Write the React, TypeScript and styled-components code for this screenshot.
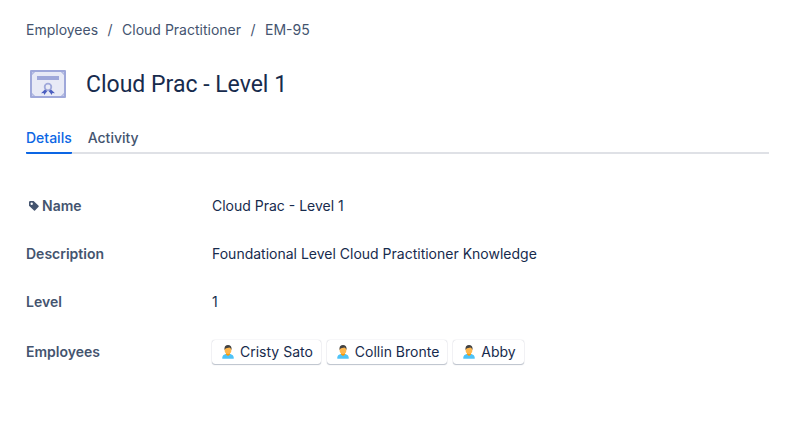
import React, { useState } from "react";
import styled, { createGlobalStyle } from "styled-components";

const GlobalStyle = createGlobalStyle`
  *, *::before, *::after { box-sizing: border-box; }
  body {
    margin: 0;
    background: #ffffff;
    color: #172b4d;
    font-family: Inter, "Liberation Sans", sans-serif;
    font-size: 14px;
    line-height: 20px;
  }
`;

const Page = styled.main`
  padding: 20px 26px;
`;

const BreadcrumbList = styled.ol`
  display: flex;
  flex-wrap: wrap;
  margin: 0;
  padding: 0;
  list-style: none;
`;

const BreadcrumbItem = styled.li`
  color: #44546f;

  & + &::before {
    content: "/";
    display: inline-block;
    width: 24px;
    text-align: center;
  }
`;

const BreadcrumbLink = styled.a`
  color: inherit;
  text-decoration: none;

  &:hover { text-decoration: underline; }
`;

const Header = styled.header`
  display: flex;
  align-items: center;
  gap: 16px;
  margin-top: 24px;
`;

const IconFrame = styled.span`
  display: flex;
  flex: none;
  width: 44px;
  height: 40px;
  align-items: center;
  justify-content: center;
`;

const Title = styled.h1`
  margin: 0;
  padding-top: 2px;
  font-family: Roboto, Inter, sans-serif;
  font-size: 23px;
  font-weight: 400;
  line-height: 28px;
`;

const TabList = styled.div`
  display: flex;
  gap: 16px;
  margin-top: 24px;
  box-shadow: inset 0 -2px #dfe1e6;
`;

const Tab = styled.button<{ $active: boolean }>`
  padding: 0 0 4px;
  border: 0;
  border-bottom: 2px solid ${(p) => (p.$active ? "#0c66e4" : "transparent")};
  border-radius: 1px;
  background: none;
  color: ${(p) => (p.$active ? "#0c66e4" : "#44546f")};
  font: inherit;
  font-weight: 500;
  cursor: pointer;
`;

const Fields = styled.dl`
  margin: 28px 0 0;
`;

const Field = styled.div`
  display: grid;
  grid-template-columns: 186px 1fr;
  align-items: center;
  padding: 13px 0;
  line-height: 22px;
`;

const Label = styled.dt`
  display: flex;
  align-items: center;
  color: #44546f;
  font-weight: 600;
`;

const TagFrame = styled.span`
  display: flex;
  width: 16px;
  justify-content: center;
`;

const Value = styled.dd`
  display: flex;
  flex-wrap: wrap;
  gap: 6px;
  margin: 0;
`;

const Chip = styled.a`
  display: flex;
  align-items: center;
  gap: 4px;
  height: 24px;
  margin: 1px 0;
  padding: 0 8px;
  border-radius: 3px;
  box-shadow: 0 1px 1px rgba(9, 30, 66, 0.25), 0 0 1px rgba(9, 30, 66, 0.31);
  color: inherit;
  text-decoration: none;
`;

const CertificateIcon = () => (
  <svg width="36" height="28" viewBox="0 0 36 28" aria-hidden="true">
    <rect width="36" height="28" rx="1" fill="#9fa8da" />
    <path d="M5 2H31L34 5V23L31 26H5L2 23V5Z" fill="#e8eaf6" />
    <path d="M2 2H4L2 4ZM34 2H32L34 4ZM2 26H4L2 24ZM34 26H32L34 24Z" fill="#c5cae9" />
    <path d="M7 6H29V10H7Z" fill="#9fa8da" />
    <circle cx="18" cy="17" r="3.3" fill="none" stroke="#9fa8da" strokeWidth="1.8" />
    <path d="M15 19.5L11 23.3L13.6 23L14.2 25L17.2 21.3ZM21 19.5L25 23.3L22.4 23L21.8 25L18.8 21.3Z" fill="#4c5fc0" />
  </svg>
);

const TagIcon = () => (
  <svg width="10" height="10" viewBox="0 0 10 10" aria-hidden="true">
    <path
      d="M1.2 0H4.6L9.6 4.8Q10 5.3 9.6 5.8L6 9.5Q5.5 10 5 9.5L0 4.7V1.2Q0 0 1.2 0ZM2.7 1.5A1.2 1.2 0 1 0 2.7 3.9A1.2 1.2 0 1 0 2.7 1.5Z"
      fill="#44546f"
      fillRule="evenodd"
    />
  </svg>
);

const PersonIcon = () => (
  <svg width="16" height="16" viewBox="0 0 16 16" aria-hidden="true">
    <path d="M2.3 14.7V13Q2.5 11 5.5 10L8 9.5L10.5 10Q13.5 11 13.7 13V14.7Z" fill="#4fc3f7" />
    <path d="M6 8H10V10.5L8 12L6 10.5Z" fill="#ff9800" />
    <ellipse cx="8" cy="6" rx="3.4" ry="4" fill="#ffb74d" />
    <path d="M4.5 6V4.5Q4.5 1 8 1Q11.5 1 11.5 4.5V6L10.6 4.2L9.5 3.5L6 4.2L5.2 5Z" fill="#424242" />
  </svg>
);

const breadcrumbs = ["Employees", "Cloud Practitioner", "EM-95"];
const tabs = ["Details", "Activity"];
const employees = ["Cristy Sato", "Collin Bronte", "Abby"];

export default function App() {
  const [activeTab, setActiveTab] = useState("Details");

  return (
    <>
      <GlobalStyle />
      <Page>
        <nav aria-label="Breadcrumbs">
          <BreadcrumbList>
            {breadcrumbs.map((name) => (
              <BreadcrumbItem key={name}>
                <BreadcrumbLink href="#">{name}</BreadcrumbLink>
              </BreadcrumbItem>
            ))}
          </BreadcrumbList>
        </nav>
        <Header>
          <IconFrame><CertificateIcon /></IconFrame>
          <Title>Cloud Prac - Level 1</Title>
        </Header>
        <TabList role="tablist">
          {tabs.map((name) => (
            <Tab
              key={name}
              type="button"
              role="tab"
              aria-selected={activeTab === name}
              $active={activeTab === name}
              onClick={() => setActiveTab(name)}
            >
              {name}
            </Tab>
          ))}
        </TabList>
        <Fields>
          <Field>
            <Label><TagFrame><TagIcon /></TagFrame>Name</Label>
            <Value>Cloud Prac - Level 1</Value>
          </Field>
          <Field>
            <Label>Description</Label>
            <Value>Foundational Level Cloud Practitioner Knowledge</Value>
          </Field>
          <Field>
            <Label>Level</Label>
            <Value>1</Value>
          </Field>
          <Field>
            <Label>Employees</Label>
            <Value>
              {employees.map((name) => (
                <Chip key={name} href="#"><PersonIcon />{name}</Chip>
              ))}
            </Value>
          </Field>
        </Fields>
      </Page>
    </>
  );
}
